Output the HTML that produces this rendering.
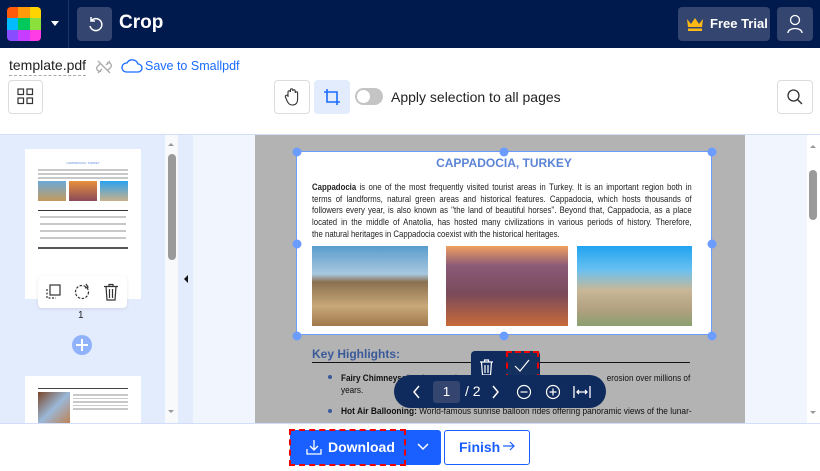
<!DOCTYPE html>
<html><head><meta charset="utf-8"><style>
*{box-sizing:border-box;margin:0;padding:0}
body{width:820px;height:471px;overflow:hidden;font-family:"Liberation Sans","DejaVu Sans",sans-serif;background:#fff;position:relative}
.abs{position:absolute}
.hdr{left:0;top:0;width:820px;height:48px;background:#011a4d}
.btn{border:1px solid #dcdcdc;border-radius:4px;background:#fff}
.line{height:3px;background:#c8c8c8;margin:2px 0}
.tl{font-size:9.5px;color:#222;height:11.7px;line-height:11.7px;width:463px;transform:scaleX(0.82);transform-origin:left top;text-align:justify;text-align-last:justify;white-space:nowrap}
.tl.last{text-align-last:left}
.kl{font-size:9.5px;color:#111;white-space:nowrap;transform:scaleX(0.86);transform-origin:left top}
</style></head><body>
<div class="abs hdr"></div>
<div class="abs" style="left:7px;top:7px;width:34px;height:34px;border-radius:4px;overflow:hidden;display:grid;grid-template-columns:repeat(3,1fr)">
<div style="background:#ff5a0a"></div><div style="background:#ff9a0a"></div><div style="background:#ffd400"></div>
<div style="background:#00bcff"></div><div style="background:#00c85a"></div><div style="background:#8ce03c"></div>
<div style="background:#8a4cff"></div><div style="background:#c73cff"></div><div style="background:#ff3ce6"></div></div>
<div class="abs" style="left:51px;top:21px;width:0;height:0;border-left:4px solid transparent;border-right:4px solid transparent;border-top:5px solid #fff"></div>
<div class="abs" style="left:68px;top:0;width:1px;height:48px;background:#1e3463"></div>
<div class="abs" style="left:77px;top:7px;width:35px;height:34px;border-radius:4px;background:#344670"></div>
<svg class="abs" style="left:85px;top:14px" width="20" height="20" viewBox="0 0 20 20"><path d="M6 7 A6 6 0 1 1 5 12" fill="none" stroke="#fff" stroke-width="1.5"/><path d="M6 3 V7 H10" fill="none" stroke="#fff" stroke-width="1.5"/></svg>
<div class="abs" style="left:119px;top:12px;color:#fff;font-weight:bold;font-size:19px">Crop</div>
<div class="abs" style="left:678px;top:7px;width:92px;height:34px;border-radius:4px;background:#344670"></div>
<svg class="abs" style="left:686px;top:16px" width="18" height="16" viewBox="0 0 18 16"><path d="M1 3 L5 8 L9 2 L13 8 L17 3 L16 11 H2 Z" fill="#fdb913"/><rect x="2" y="12.5" width="14" height="2.5" fill="#fdb913"/></svg>
<div class="abs" style="left:710px;top:16px;color:#fff;font-size:13px;font-weight:bold">Free Trial</div>
<div class="abs" style="left:777px;top:7px;width:36px;height:34px;border-radius:4px;background:#344670"></div>
<svg class="abs" style="left:786px;top:14px" width="18" height="20" viewBox="0 0 18 20"><circle cx="9" cy="6" r="4.5" fill="none" stroke="#fff" stroke-width="1.3"/><path d="M2 19 C2 13 16 13 16 19" fill="none" stroke="#fff" stroke-width="1.3"/></svg>
<div class="abs" style="left:9px;top:57px;font-size:14px;color:#222;border-bottom:1px dashed #aaa;padding-bottom:2px">template.pdf</div>
<svg class="abs" style="left:95px;top:58px" width="18" height="18" viewBox="0 0 18 18"><g fill="none" stroke="#aaa" stroke-width="1.3"><path d="M7 11 L3 15 M11 7 L15 3 M5 6 L2 9 a3 3 0 0 0 4 4 M13 12 L16 9 a3 3 0 0 0 -4 -4"/><path d="M3 3 L15 15"/></g></svg>
<svg class="abs" style="left:121px;top:58px" width="22" height="16" viewBox="0 0 22 16"><path d="M5 14 H17 a4 4 0 0 0 0 -8 a6 6 0 0 0 -11 -1 a4.5 4.5 0 0 0 -1 9z" fill="none" stroke="#1a6cff" stroke-width="1.3"/></svg>
<div class="abs" style="left:145px;top:59px;font-size:12.5px;color:#1a6cff">Save to Smallpdf</div>
<div class="abs btn" style="left:8px;top:80px;width:35px;height:34px"></div>
<svg class="abs" style="left:17px;top:88px" width="17" height="17" viewBox="0 0 17 17"><g fill="none" stroke="#333" stroke-width="1.2"><rect x="1" y="1" width="5.5" height="5.5"/><rect x="10" y="1" width="5.5" height="5.5"/><rect x="1" y="10" width="5.5" height="5.5"/><rect x="10" y="10" width="5.5" height="5.5"/></g></svg>
<div class="abs btn" style="left:274px;top:80px;width:36px;height:34px"></div>
<svg class="abs" style="left:284px;top:87px" width="16" height="19" viewBox="0 0 16 19"><path d="M4 10 V5 a1.2 1.2 0 0 1 2.4 0 V3 a1.2 1.2 0 0 1 2.4 0 V4 a1.2 1.2 0 0 1 2.4 0 V6 a1.2 1.2 0 0 1 2.4 0 V12 c0 4 -2 6 -5 6 c-3 0 -4 -1 -6 -5 L1.5 10 a1.2 1.2 0 0 1 2.5 -1z" fill="none" stroke="#333" stroke-width="1.1"/></svg>
<div class="abs" style="left:314px;top:80px;width:36px;height:34px;border-radius:4px;background:#e3ecfd"></div>
<svg class="abs" style="left:323px;top:88px" width="18" height="18" viewBox="0 0 18 18"><path d="M4 1 V14 H17 M1 4 H14 V17" fill="none" stroke="#1a6cff" stroke-width="1.6"/></svg>
<div class="abs" style="left:355px;top:88px;width:28px;height:17px;border-radius:9px;background:#c4c4c4"></div>
<div class="abs" style="left:357px;top:90px;width:13px;height:13px;border-radius:50%;background:#fff"></div>
<div class="abs" style="left:391px;top:89px;font-size:14px;color:#222">Apply selection to all pages</div>
<div class="abs btn" style="left:777px;top:80px;width:36px;height:34px"></div>
<svg class="abs" style="left:786px;top:88px" width="18" height="18" viewBox="0 0 18 18"><circle cx="7.5" cy="7.5" r="5.5" fill="none" stroke="#333" stroke-width="1.3"/><path d="M11.5 11.5 L16 16" stroke="#333" stroke-width="1.4"/></svg>
<div class="abs" style="left:0;top:134px;width:820px;height:1px;background:#d2defa"></div>
<div class="abs" style="left:0;top:135px;width:193px;height:288px;background:#e3ecfd"></div>
<div class="abs" style="left:165px;top:135px;width:13px;height:288px;background:#f8f9fb"></div>
<div class="abs" style="left:168px;top:154px;width:8px;height:106px;border-radius:4px;background:#9a9a9a"></div>
<div class="abs" style="left:168px;top:143px;border-left:3px solid transparent;border-right:3px solid transparent;border-bottom:3px solid #999"></div>
<div class="abs" style="left:168px;top:410px;border-left:3px solid transparent;border-right:3px solid transparent;border-top:3px solid #999"></div>
<div class="abs" style="left:178px;top:135px;width:15px;height:288px;background:#e3ecfd"></div>
<div class="abs" style="left:184px;top:275px;border-top:4px solid transparent;border-bottom:4px solid transparent;border-right:4px solid #111"></div>
<div class="abs" style="left:193px;top:135px;width:62px;height:288px;background:#f0f5fe"></div>
<div class="abs" style="left:25px;top:149px;width:116px;height:150px;background:#fff;padding:12px 13px">
<div style="font-size:3px;color:#5b84d6;text-align:center;height:6px">CAPPADOCIA, TURKEY</div>
<div class="line" style="height:2px"></div><div class="line" style="height:2px"></div><div class="line" style="height:2px"></div>
<div style="display:flex;gap:3px;margin-top:2px"><div style="width:28px;height:20px;background:linear-gradient(#6aa8d8,#c49a5c)"></div><div style="width:29px;height:20px;background:linear-gradient(#e8903c,#8a4a5a)"></div><div style="width:28px;height:20px;background:linear-gradient(#2aa2f0,#c8b08a)"></div></div>
<div style="height:1px;background:#333;margin-top:9px"></div>
<div class="line" style="height:2px;margin:5px 2px"></div><div class="line" style="height:2px;margin:5px 2px"></div><div class="line" style="height:2px;margin:5px 2px"></div><div class="line" style="height:2px;margin:5px 2px"></div>
<div style="height:2px;background:#555;margin-top:8px"></div></div>
<div class="abs" style="left:38px;top:276px;width:89px;height:32px;background:#fff;border-radius:4px;box-shadow:0 1px 3px rgba(0,0,0,.1)"></div>
<svg class="abs" style="left:44px;top:283px" width="18" height="18" viewBox="0 0 18 18"><rect x="6" y="2" width="10" height="10" fill="none" stroke="#333" stroke-width="1.2"/><path d="M3 6 V15 H12" fill="none" stroke="#333" stroke-width="1.2" stroke-dasharray="2 1.5"/></svg>
<svg class="abs" style="left:73px;top:283px" width="18" height="18" viewBox="0 0 18 18"><circle cx="9" cy="9" r="6.5" fill="none" stroke="#333" stroke-width="1.2" stroke-dasharray="2.5 1.5"/><path d="M13 1 L15 4 L12 5" fill="none" stroke="#333" stroke-width="1.2"/></svg>
<svg class="abs" style="left:103px;top:283px" width="16" height="18" viewBox="0 0 16 18"><path d="M1 3.5 H15 M6 3.5 V1.5 H10 V3.5 M3 3.5 L4 17 H12 L13 3.5 M6.5 6 V15 M9.5 6 V15" fill="none" stroke="#333" stroke-width="1.2"/></svg>
<div class="abs" style="left:78px;top:310px;font-size:10px;color:#222">1</div>
<div class="abs" style="left:72px;top:335px;width:20px;height:20px;border-radius:50%;background:#8fb2fa"></div>
<div class="abs" style="left:76px;top:344px;width:12px;height:2px;background:#fff"></div><div class="abs" style="left:81px;top:339px;width:2px;height:12px;background:#fff"></div>
<div class="abs" style="left:25px;top:376px;width:116px;height:47px;background:#fff;padding:12px 13px 0">
<div style="height:1px;background:#444;margin-bottom:3px"></div>
<div style="display:flex;gap:3px"><div style="width:32px;height:32px;background:linear-gradient(135deg,#7a4628,#9ab8d8 50%,#c08050)"></div><div style="flex:1"><div class="line" style="height:1.5px"></div><div class="line" style="height:1.5px"></div><div class="line" style="height:1.5px"></div><div class="line" style="height:1.5px"></div><div class="line" style="height:1.5px"></div></div></div></div>
<div class="abs" style="left:255px;top:135px;width:490px;height:288px;background:#b3b3b3"></div>
<div class="abs" style="left:745px;top:135px;width:62px;height:288px;background:#f0f5fe"></div>
<div class="abs" style="left:807px;top:135px;width:13px;height:288px;background:#fff"></div>
<div class="abs" style="left:809px;top:170px;width:8px;height:50px;border-radius:4px;background:#9a9a9a"></div>
<div class="abs" style="left:810px;top:145px;border-left:3px solid transparent;border-right:3px solid transparent;border-bottom:3px solid #999"></div>
<div class="abs" style="left:810px;top:411px;border-left:3px solid transparent;border-right:3px solid transparent;border-top:3px solid #999"></div>
<div class="abs" style="left:296px;top:151px;width:416px;height:184px;background:#fff;border:1.5px solid #6b9cff"></div>
<div class="abs" style="left:296px;top:156px;width:416px;text-align:center;color:#5b84d6;font-weight:bold;font-size:12px">CAPPADOCIA, TURKEY</div>
<div class="abs" style="left:312px;top:182px">
<div class="tl"><b>Cappadocia</b> is one of the most frequently visited tourist areas in Turkey. It is an important region both in</div>
<div class="tl">terms of landforms, natural green areas and historical features. Cappadocia, which hosts thousands of</div>
<div class="tl">followers every year, is also known as ''the land of beautiful horses''. Beyond that, Cappadocia, as a place</div>
<div class="tl">located in the middle of Anatolia, has hosted many civilizations in various periods of history. Therefore,</div>
<div class="tl last">the natural heritages in Cappadocia coexist with the historical heritages.</div></div>
<div class="abs" style="left:312px;top:246px;width:116px;height:80px;background:linear-gradient(#5a9ccc 0%,#a8c8e0 35%,#8a7050 45%,#c8a878 75%,#a0784c)"></div>
<div class="abs" style="left:446px;top:246px;width:122px;height:80px;background:linear-gradient(#f0a060 0%,#8a5a78 25%,#7a4a5a 60%,#c86a3a)"></div>
<div class="abs" style="left:577px;top:246px;width:115px;height:80px;background:linear-gradient(#20a4f0 0%,#6ac0f0 30%,#c8b898 55%,#b0a080 80%,#8aa070)"></div>
<svg class="abs" style="left:290px;top:145px" width="430" height="198"><g fill="#6b9cff"><circle cx="7" cy="7" r="4.5"/><circle cx="214" cy="7" r="4.5"/><circle cx="422" cy="7" r="4.5"/><circle cx="7" cy="99" r="4.5"/><circle cx="422" cy="99" r="4.5"/><circle cx="7" cy="191" r="4.5"/><circle cx="214" cy="191" r="4.5"/><circle cx="422" cy="191" r="4.5"/></g></svg>
<div class="abs" style="left:312px;top:347px;font-size:12px;font-weight:bold;color:#3a5a9a">Key Highlights:</div>
<div class="abs" style="left:312px;top:362px;width:378px;height:1px;background:#111"></div>
<div class="abs" style="left:328px;top:375px;width:4px;height:4px;border-radius:50%;background:#3a5a9a"></div>
<div class="abs kl" style="left:341px;top:373px"><b>Fairy Chimneys:</b> Iconic cone-shaped<span style="display:inline-block;width:150px"></span>erosion over millions of</div>
<div class="abs kl" style="left:341px;top:385px">years.</div>
<div class="abs" style="left:328px;top:409px;width:4px;height:4px;border-radius:50%;background:#3a5a9a"></div>
<div class="abs kl" style="left:341px;top:406px;transform:scaleX(0.88)"><b>Hot Air Ballooning:</b> World-famous sunrise balloon rides offering panoramic views of the lunar-</div>
<div class="abs" style="left:471px;top:351px;width:69px;height:33px;background:#0f2a5c;border-radius:4px 4px 0 0"></div>
<svg class="abs" style="left:479px;top:359px" width="15" height="17" viewBox="0 0 15 17"><path d="M1 3 H14 M5.5 3 V1 H9.5 V3 M2.5 3 L3.5 16 H11.5 L12.5 3 M6 6 V14 M9 6 V14" fill="none" stroke="#fff" stroke-width="1.2"/></svg>
<div class="abs" style="left:506px;top:351px;width:33px;height:29px;border:2px dashed #e00;background:#14305e"></div>
<svg class="abs" style="left:513px;top:358px" width="18" height="16" viewBox="0 0 18 16"><path d="M2 8 L7 13 L16 2" fill="none" stroke="#fff" stroke-width="1.2"/></svg>
<div class="abs" style="left:394px;top:375px;width:212px;height:33px;background:#0f2a5c;border-radius:17px"></div>
<svg class="abs" style="left:412px;top:385px" width="10" height="14"><path d="M7 1 L2 7 L7 13" fill="none" stroke="#fff" stroke-width="1.5"/></svg>
<div class="abs" style="left:433px;top:381px;width:27px;height:22px;background:#344670;border-radius:3px;color:#fff;font-size:13px;text-align:center;line-height:22px">1</div>
<div class="abs" style="left:465px;top:383px;color:#fff;font-size:14px">/ 2</div>
<svg class="abs" style="left:490px;top:385px" width="10" height="14"><path d="M3 1 L8 7 L3 13" fill="none" stroke="#fff" stroke-width="1.5"/></svg>
<svg class="abs" style="left:516px;top:384px" width="16" height="16"><circle cx="8" cy="8" r="6.5" fill="none" stroke="#fff" stroke-width="1.2"/><path d="M4.5 8 H11.5" stroke="#fff" stroke-width="1.2"/></svg>
<svg class="abs" style="left:545px;top:384px" width="16" height="16"><circle cx="8" cy="8" r="6.5" fill="none" stroke="#fff" stroke-width="1.2"/><path d="M4.5 8 H11.5 M8 4.5 V11.5" stroke="#fff" stroke-width="1.2"/></svg>
<svg class="abs" style="left:573px;top:385px" width="18" height="14"><path d="M1 1 V13 M17 1 V13 M4 7 H14 M6 5 L4 7 L6 9 M12 5 L14 7 L12 9" fill="none" stroke="#fff" stroke-width="1.3"/></svg>
<div class="abs" style="left:0;top:423px;width:820px;height:1px;background:#d2defa"></div>
<div class="abs" style="left:290px;top:430px;width:151px;height:35px;background:#1a5fff;border-radius:3px"></div>
<div class="abs" style="left:289px;top:429px;width:117px;height:37px;border:2px dashed #e00"></div>
<svg class="abs" style="left:306px;top:439px" width="16" height="16"><path d="M8 1 V11 M4 7 L8 11 L12 7 M1 10 V15 H15 V10" fill="none" stroke="#fff" stroke-width="1.3"/></svg>
<div class="abs" style="left:328px;top:439px;color:#fff;font-weight:bold;font-size:14px">Download</div>
<svg class="abs" style="left:416px;top:442px" width="14" height="10"><path d="M2 2 L7 7 L12 2" fill="none" stroke="#fff" stroke-width="1.5"/></svg>
<div class="abs" style="left:444px;top:430px;width:86px;height:35px;border:1.5px solid #1a5fff;border-radius:3px"></div>
<div class="abs" style="left:459px;top:439px;color:#1a5fff;font-weight:bold;font-size:14px">Finish</div>
<svg class="abs" style="left:502px;top:440px" width="14" height="12"><path d="M1 6 H12 M8 2 L12 6 L8 10" fill="none" stroke="#1a5fff" stroke-width="1.2"/></svg>
</body></html>
